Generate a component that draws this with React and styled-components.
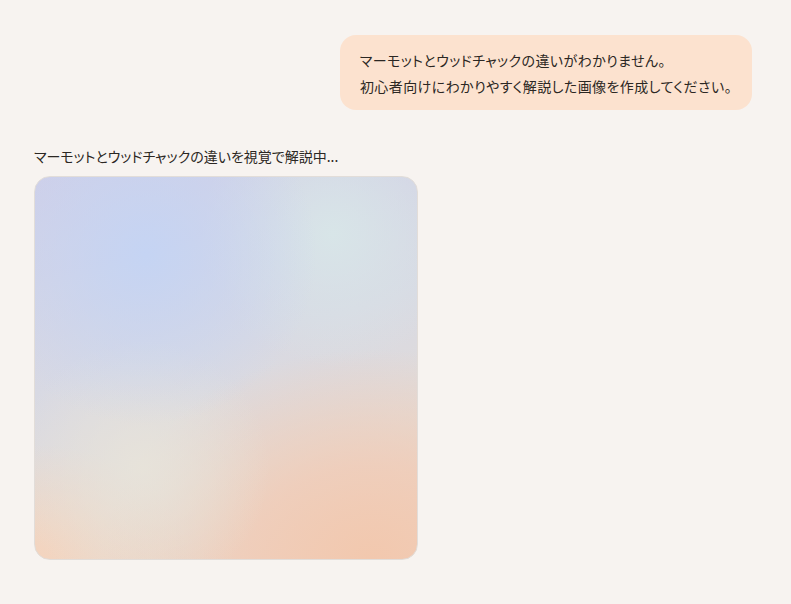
import React from 'react';
import styled, { createGlobalStyle } from 'styled-components';

const GlobalStyle = createGlobalStyle`
  html, body {
    margin: 0;
    padding: 0;
    background: #f7f3f0;
  }
  body {
    font-family: "Noto Sans CJK JP", "Noto Sans", sans-serif;
    color: #2b2723;
  }
`;

const Page = styled.div`
  width: 791px;
  height: 604px;
  box-sizing: border-box;
  padding: 35px 39px 0 34px;
  display: flex;
  flex-direction: column;
`;

const UserRow = styled.div`
  display: flex;
  justify-content: flex-end;
`;

const Bubble = styled.div`
  background: #fce2cf;
  border-radius: 16px;
  padding: 12px 20px 11px 20px;
  font-size: 14px;
  line-height: 26px;
  font-feature-settings: "palt";
  letter-spacing: 0.42px;
`;

const Status = styled.div`
  margin-top: 36px;
  font-size: 14px;
  line-height: 20px;
  font-feature-settings: "palt";
  color: #2b2723;
`;

const Canvas = styled.div`
  margin-top: 10px;
  width: 384px;
  height: 384px;
  box-sizing: border-box;
  border: 1px solid #e2ddd9;
  border-radius: 16px;
  background:
    radial-gradient(circle at 29% 20%, rgba(196, 212, 244, 0.95) 0%, rgba(196, 212, 244, 0.5) 20%, rgba(196, 212, 244, 0) 42%),
    radial-gradient(circle at 78% 15%, rgba(216, 230, 232, 0.95) 0%, rgba(216, 230, 232, 0) 30%),
    radial-gradient(circle at 28% 76%, rgba(232, 228, 218, 0.85) 0%, rgba(232, 228, 218, 0) 32%),
    radial-gradient(ellipse 70% 55% at 88% 100%, rgba(242, 200, 174, 1) 0%, rgba(242, 202, 180, 0.75) 45%, rgba(242, 204, 182, 0) 100%),
    radial-gradient(ellipse 40% 30% at 0% 100%, rgba(244, 212, 190, 1) 0%, rgba(244, 212, 190, 0) 100%),
    linear-gradient(165deg, #d0cfe7 0%, #d8d9e3 45%, #e2dcd8 72%, #ecd6c6 100%);
`;

export default function App() {
  return (
    <>
      <GlobalStyle />
      <Page>
        <UserRow>
          <Bubble>
            マーモットとウッドチャックの違いがわかりません。
            <br />
            初心者向けにわかりやすく解説した画像を作成してください。
          </Bubble>
        </UserRow>
        <Status>マーモットとウッドチャックの違いを視覚で解説中...</Status>
        <Canvas />
      </Page>
    </>
  );
}
